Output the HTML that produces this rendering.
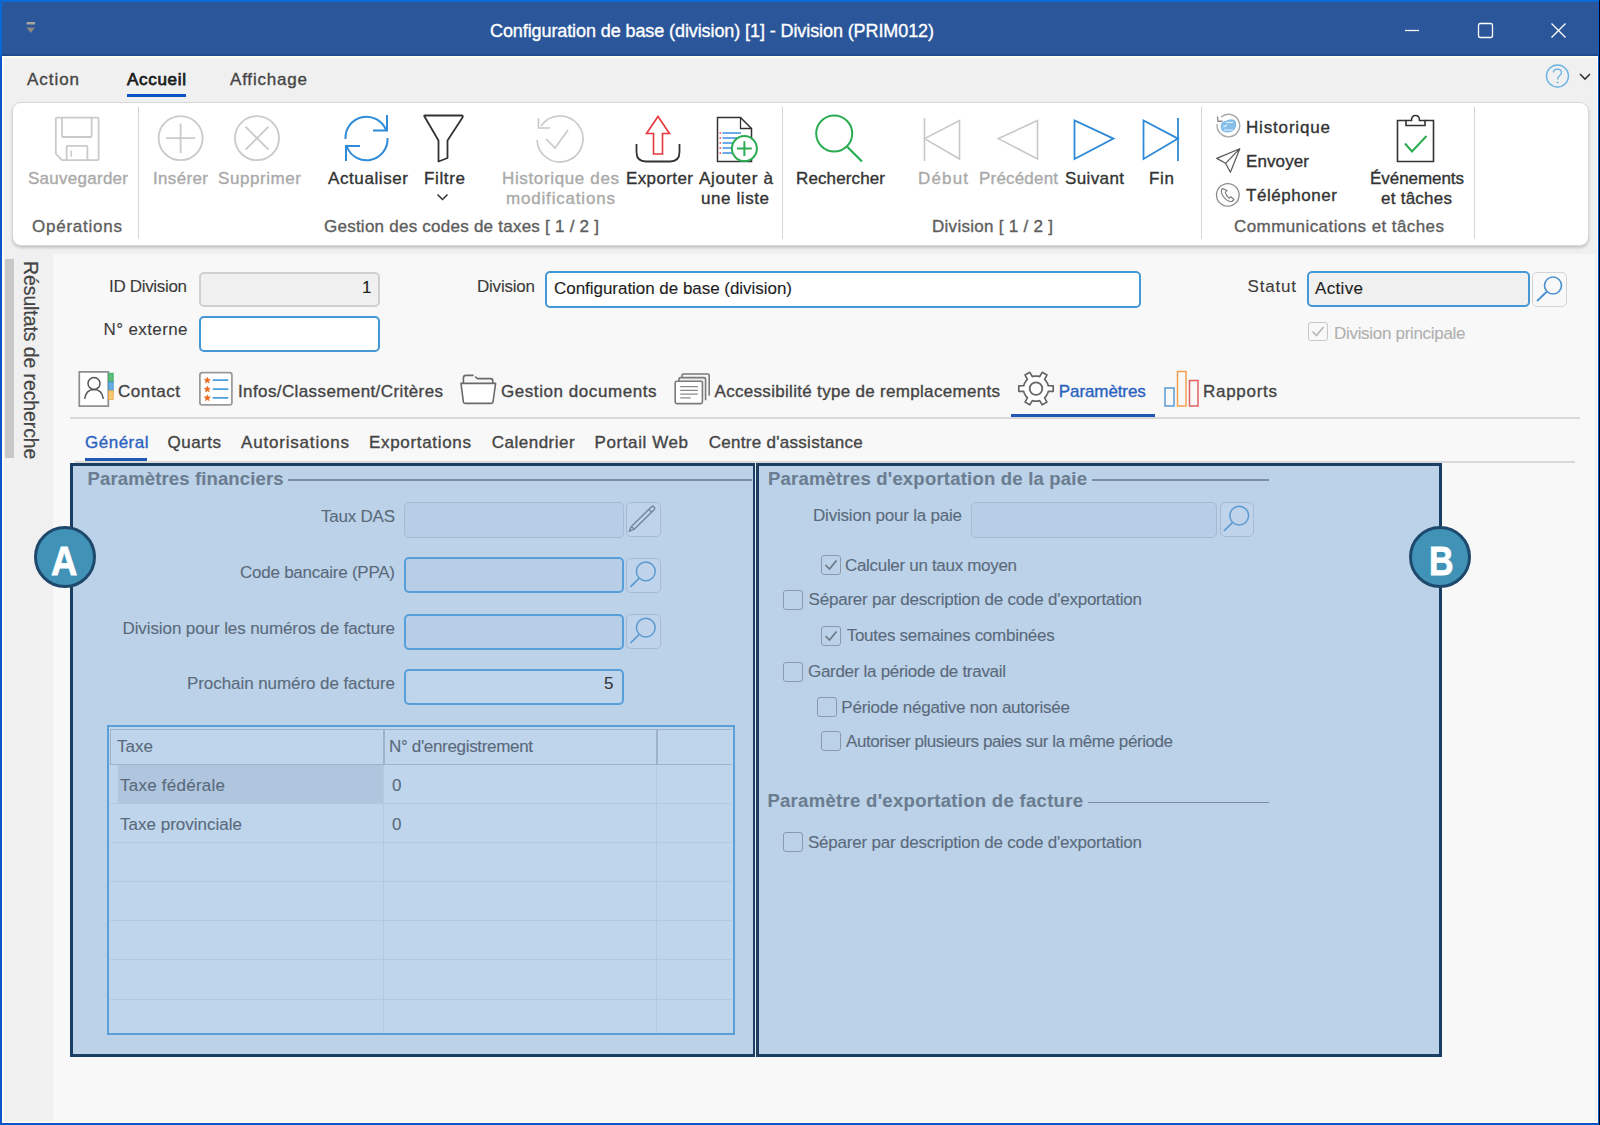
<!DOCTYPE html>
<html><head><meta charset="utf-8"><title>Configuration de base (division)</title>
<style>html,body{margin:0;padding:0}body{width:1600px;height:1125px;overflow:hidden;position:relative;font-family:"Liberation Sans", sans-serif;background:#f8f8f8}svg{overflow:visible}</style>
</head><body>
<div style="position:absolute;left:0px;top:0px;width:1600px;height:1125px;background:#0a55cc"></div>
<div style="position:absolute;left:0px;top:0px;width:1600px;height:1.5px;background:#0b6ad8"></div>
<div style="position:absolute;left:0px;top:0px;width:2px;height:57px;background:#0868d6"></div>
<div style="position:absolute;left:2px;top:1.5px;width:1596px;height:53px;background:#2b579a"></div>
<div style="position:absolute;left:2px;top:54px;width:1596px;height:1.5px;background:#1f4b8e"></div>
<div style="position:absolute;left:2px;top:55.5px;width:1596px;height:1067.5px;background:#fffcf4"></div>
<div style="position:absolute;left:4px;top:57.5px;width:1593px;height:1063.5px;background:#f0f0f0"></div>
<div style="position:absolute;left:53px;top:254px;width:1542px;height:867px;background:#f8f8f8"></div>
<div style="position:absolute;left:1599px;top:0px;width:1px;height:1125px;background:#05081a"></div>
<svg style="position:absolute;left:24px;top:20px;" width="14" height="16" viewBox="24 20 14 16" fill="none"><rect x="26.5" y="22" width="8.5" height="2.5" fill="#a8a49c"/><path d="M26.5 27.5 L35 27.5 L30.75 33 Z" fill="#8c8880"/></svg>
<svg style="position:absolute;left:1400px;top:18px;" width="170" height="26" viewBox="1400 18 170 26" fill="none"><path d="M1405 30.5 H1419" stroke="#fff" stroke-width="1.3"/><rect x="1478.5" y="23.5" width="14" height="14" rx="2" stroke="#fff" stroke-width="1.3"/><path d="M1551.5 23.5 L1565.5 37.5 M1565.5 23.5 L1551.5 37.5" stroke="#fff" stroke-width="1.3"/></svg>
<div style="position:absolute;left:127px;top:94px;width:59px;height:3px;background:#0b52c4"></div>
<svg style="position:absolute;left:1540px;top:60px;" width="56" height="34" viewBox="1540 60 56 34" fill="none"><circle cx="1557.5" cy="76" r="11" stroke="#6cb4e4" stroke-width="1.4"/><path d="M1553.5 72.5 C1553.5 68 1561.5 68 1561.5 72.5 C1561.5 75.5 1557.5 75.5 1557.5 79.5" stroke="#6cb4e4" stroke-width="1.4"/><circle cx="1557.5" cy="82.5" r="0.9" fill="#6cb4e4"/><path d="M1580 74 L1585 79 L1590 74" stroke="#333" stroke-width="1.6"/></svg>
<div style="position:absolute;left:11.5px;top:102px;width:1577.5px;height:144px;background:#fff;border:1px solid #d8d8d8;border-radius:9px;box-sizing:border-box;box-shadow:0 2px 3px rgba(0,0,0,0.18)"></div>
<div style="position:absolute;left:138px;top:107px;width:1px;height:132px;background:#d6d6d6"></div>
<div style="position:absolute;left:782px;top:107px;width:1px;height:132px;background:#d6d6d6"></div>
<div style="position:absolute;left:1201px;top:107px;width:1px;height:132px;background:#d6d6d6"></div>
<div style="position:absolute;left:1474px;top:107px;width:1px;height:132px;background:#d6d6d6"></div>
<svg style="position:absolute;left:50px;top:112px;" width="54" height="54" viewBox="50 112 54 54" fill="none"><path d="M55.8 118.8 Q55.8 117.6 57 117.6 H97.4 Q98.6 117.6 98.6 118.8 V159 Q98.6 160.2 97.4 160.2 H62 L55.8 153.6 Z" stroke="#cacaca" stroke-width="1.8" stroke-linejoin="round"/><path d="M62 117.6 V136.2 Q62 137 62.8 137 H90.8 Q91.6 137 91.6 136.2 V117.6" stroke="#cacaca" stroke-width="1.8"/><path d="M66.6 160.2 V146.6 Q66.6 145.8 67.4 145.8 H86.6 Q87.4 145.8 87.4 146.6 V160.2" stroke="#cacaca" stroke-width="1.8"/><path d="M71.2 151 V156.2" stroke="#cacaca" stroke-width="1.5" stroke-linecap="round"/></svg>
<svg style="position:absolute;left:155px;top:112px;" width="126" height="54" viewBox="155 112 126 54" fill="none"><circle cx="180.6" cy="138.2" r="22" stroke="#cacaca" stroke-width="1.8"/><path d="M166 138.2 H195.2 M180.6 123.5 V153" stroke="#cacaca" stroke-width="1.8"/><circle cx="257" cy="138.2" r="22" stroke="#cacaca" stroke-width="1.8"/><path d="M245.5 126.7 L268.5 149.7 M268.5 126.7 L245.5 149.7" stroke="#cacaca" stroke-width="1.8"/></svg>
<svg style="position:absolute;left:340px;top:110px;" width="54" height="56" viewBox="340 110 54 56" fill="none"><path d="M345.5 139 A21 21 0 0 1 386 130" stroke="#2f8ad8" stroke-width="2"/><path d="M387.5 138 A21 21 0 0 1 347 147" stroke="#2f8ad8" stroke-width="2"/><path d="M387 115 V130.5 H373" stroke="#2f8ad8" stroke-width="2"/><path d="M346 161 V146 H360" stroke="#2f8ad8" stroke-width="2"/></svg>
<svg style="position:absolute;left:418px;top:110px;" width="52" height="56" viewBox="418 110 52 56" fill="none"><path d="M424.5 116.5 Q423.5 115.5 425 115.5 H461.5 Q463.5 115.5 462.5 117.5 L447.5 140.5 V158 L438.5 161.5 V140.5 Z" stroke="#333" stroke-width="1.8" stroke-linejoin="round"/></svg>
<svg style="position:absolute;left:530px;top:110px;" width="60" height="58" viewBox="530 110 60 58" fill="none"><path d="M541 126 A23 23 0 1 1 537 140" stroke="#c8c8c8" stroke-width="1.6"/><path d="M538.5 118 V128 H550" stroke="#c8c8c8" stroke-width="1.6"/><path d="M546 139 L555 148 L568 130" stroke="#c8c8c8" stroke-width="1.6"/></svg>
<svg style="position:absolute;left:630px;top:110px;" width="56" height="58" viewBox="630 110 56 58" fill="none"><path d="M636.5 144 V152 Q636.5 161.5 646 161.5 H670 Q679.5 161.5 679.5 152 V144" stroke="#333" stroke-width="1.8"/><path d="M658 116.5 L646.5 133.5 H653.5 V154 H662.5 V133.5 H669.5 Z" stroke="#e8373c" stroke-width="1.6" stroke-linejoin="miter"/></svg>
<svg style="position:absolute;left:712px;top:112px;" width="48" height="54" viewBox="712 112 48 54" fill="none"><path d="M717.5 117.5 H740.5 L751.5 128.5 V161.5 H717.5 Z" stroke="#333" stroke-width="1.5"/><path d="M740.5 117.5 V128.5 H751.5" stroke="#333" stroke-width="1.3"/><path d="M722.5 133 H741" stroke="#3d8fe0" stroke-width="1.5"/><path d="M719.5 133 H721" stroke="#e84040" stroke-width="1.5"/><path d="M722.5 138 H741" stroke="#3d8fe0" stroke-width="1.5"/><path d="M719.5 138 H721" stroke="#e84040" stroke-width="1.5"/><path d="M722.5 143 H741" stroke="#3d8fe0" stroke-width="1.5"/><path d="M719.5 143 H721" stroke="#e84040" stroke-width="1.5"/><path d="M722.5 148 H741" stroke="#3d8fe0" stroke-width="1.5"/><path d="M719.5 148 H721" stroke="#e84040" stroke-width="1.5"/><path d="M722.5 153 H741" stroke="#3d8fe0" stroke-width="1.5"/><path d="M719.5 153 H721" stroke="#e84040" stroke-width="1.5"/><circle cx="744.4" cy="148.6" r="12.5" fill="#fff" stroke="#2aad52" stroke-width="2"/><path d="M737 148.6 H751.8 M744.4 141.2 V156" stroke="#2aad52" stroke-width="2"/></svg>
<svg style="position:absolute;left:810px;top:110px;" width="58" height="58" viewBox="810 110 58 58" fill="none"><circle cx="834.2" cy="133.5" r="18" stroke="#2aad52" stroke-width="2"/><path d="M847 146.5 L862 161.5" stroke="#2aad52" stroke-width="2.2"/></svg>
<svg style="position:absolute;left:915px;top:112px;" width="270" height="54" viewBox="915 112 270 54" fill="none"><path d="M924.5 118 V161" stroke="#c8c8c8" stroke-width="1.6"/><path d="M924.5 138.6 L959.5 120.5 V159 Z" stroke="#c8c8c8" stroke-width="1.6" stroke-linejoin="miter"/><path d="M998.5 138.6 L1037.5 120.5 V159 Z" stroke="#c8c8c8" stroke-width="1.6"/><path d="M1074.5 120.5 V159 L1113.5 138.6 Z" stroke="#2f8ad8" stroke-width="1.8"/><path d="M1143.5 120.5 V159 L1178 138.6 Z" stroke="#2f8ad8" stroke-width="1.8"/><path d="M1178 118 V161" stroke="#2f8ad8" stroke-width="1.8"/></svg>
<svg style="position:absolute;left:1212px;top:112px;" width="32" height="96" viewBox="1212 112 32 96" fill="none"><path d="M1221 117 A11.3 11.3 0 1 1 1217.2 124" stroke="#a8a8a8" stroke-width="1.4"/><path d="M1217.5 116.5 L1218 121.5 L1222.5 121" stroke="#888" stroke-width="1.3"/><path d="M1220.5 126 Q1221 121.5 1225 121 L1229 119.5 Q1235 118.5 1236 122 Q1237 126 1235 129 Q1232 133 1226 132.5 Q1220.5 131.5 1220.5 126 Z" fill="#86bfe8"/><path d="M1226 122.5 H1233 M1223.5 127 L1227 125 M1224 130 H1233" stroke="#e6f2fb" stroke-width="1.2"/><path d="M1216.7 158.4 L1239.8 148.7 L1230.4 172.2 L1225.6 163.3 Z M1225.6 163.3 L1239.8 148.7" stroke="#555" stroke-width="1.2" stroke-linejoin="round"/><circle cx="1227.8" cy="194.9" r="11.3" stroke="#8a8a8a" stroke-width="1.3"/><path d="M1222.5 188.5 Q1220 191 1223 196 Q1227 202 1232 201.5 L1234 199.5 L1231 196.8 L1229 198.2 Q1226 195.5 1225.3 192.2 L1227 190.6 Z" stroke="#777" stroke-width="1.1" stroke-linejoin="round"/></svg>
<svg style="position:absolute;left:1392px;top:110px;" width="48" height="56" viewBox="1392 110 48 56" fill="none"><path d="M1406 120.5 H1397.5 V161.5 H1433.5 V120.5 H1425" stroke="#333" stroke-width="1.6"/><path d="M1406 125.5 V120.5 H1411.5 Q1411.5 115.5 1415.5 115.5 Q1419.5 115.5 1419.5 120.5 H1425 V125.5 Z" stroke="#333" stroke-width="1.6"/><path d="M1405 143.5 L1412 151.5 L1426.5 136" stroke="#2aad52" stroke-width="2"/></svg>
<svg style="position:absolute;left:434px;top:190px;" width="18" height="14" viewBox="434 190 18 14" fill="none"><path d="M437.5 194.5 L442.5 199.5 L447.5 194.5" stroke="#333" stroke-width="1.5"/></svg>
<div style="position:absolute;left:5px;top:259px;width:9px;height:199px;background:#c8c8c8"></div>
<div style="position:absolute;left:22px;top:262px;width:20px;height:202px;"><div style="position:absolute;left:0;top:0;transform-origin:0 0;transform:translate(19px,-1px) rotate(90deg);white-space:nowrap;font-size:19.5px;line-height:20px;color:#444;letter-spacing:-0.1px;-webkit-text-stroke:0.2px #444">Résultats de recherche</div></div>
<div style="position:absolute;left:199px;top:272px;width:181px;height:35px;background:#f0f0f0;border:2px solid #d0d0d0;border-radius:5px;box-sizing:border-box"></div>
<div style="position:absolute;left:199px;top:315.5px;width:181px;height:36px;background:#fff;border:2px solid #4697d5;border-radius:5px;box-sizing:border-box"></div>
<div style="position:absolute;left:545.2px;top:271.4px;width:595.5px;height:36.4px;background:#fff;border:2px solid #4697d5;border-radius:5px;box-sizing:border-box"></div>
<div style="position:absolute;left:1306.6px;top:271.4px;width:223.2px;height:36px;background:#f0f0f0;border:2px solid #4697d5;border-radius:5px;box-sizing:border-box"></div>
<div style="position:absolute;left:1532px;top:272px;width:35px;height:35px;background:#f8f8f8;border:1.5px solid #d4d4d4;border-radius:5px;box-sizing:border-box"></div>
<svg style="position:absolute;left:1532px;top:272px;" width="35" height="35" viewBox="1532 272 35 35" fill="none"><circle cx="1553" cy="285.5" r="8.5" stroke="#4a90d0" stroke-width="1.6"/><path d="M1547 291.5 L1537 301" stroke="#4a90d0" stroke-width="1.8"/></svg>
<div style="position:absolute;left:1308px;top:322px;width:20px;height:19px;border:1.3px solid #c8c8c8;border-radius:3px;box-sizing:border-box"></div>
<svg style="position:absolute;left:1308px;top:322px;" width="20" height="19" viewBox="1308 322 20 19" fill="none"><path d="M1312.5 331.5 L1316.5 335.5 L1323.5 327" stroke="#b8b8b8" stroke-width="1.6"/></svg>
<svg style="position:absolute;left:75px;top:368px;" width="42" height="42" viewBox="75 368 42 42" fill="none"><rect x="79.3" y="371.9" width="29" height="34.2" stroke="#8c8c8c" stroke-width="1.7" fill="#fff"/><circle cx="94" cy="383.4" r="6" stroke="#555" stroke-width="1.5"/><path d="M84.6 398.8 Q86 389.4 94 389.4 Q102 389.4 103.4 398.8" stroke="#555" stroke-width="1.5"/><rect x="108.6" y="373.2" width="4.6" height="8.8" fill="#5cbf78" stroke="#3aa85a" stroke-width="0.8"/><rect x="108.6" y="382" width="4.6" height="8.8" fill="#6aaee0" stroke="#3d8fd0" stroke-width="0.8"/><rect x="108.6" y="390.8" width="4.6" height="8.6" fill="#f6c870" stroke="#eea040" stroke-width="0.8"/></svg>
<svg style="position:absolute;left:196px;top:368px;" width="40" height="42" viewBox="196 368 40 42" fill="none"><rect x="199.9" y="372.7" width="32" height="32.1" rx="2.4" stroke="#9a9a9a" stroke-width="1.8" fill="#fff"/><path d="M207.30 377.20 L208.15 379.24 L210.34 379.41 L208.67 380.84 L209.18 382.99 L207.30 381.84 L205.42 382.99 L205.93 380.84 L204.26 379.41 L206.45 379.24 Z" fill="#e86c20" stroke="#e86c20" stroke-width="0.6" stroke-linejoin="round"/><path d="M207.30 386.10 L208.15 388.14 L210.34 388.31 L208.67 389.74 L209.18 391.89 L207.30 390.74 L205.42 391.89 L205.93 389.74 L204.26 388.31 L206.45 388.14 Z" fill="#e86c20" stroke="#e86c20" stroke-width="0.6" stroke-linejoin="round"/><path d="M207.30 394.80 L208.15 396.84 L210.34 397.01 L208.67 398.44 L209.18 400.59 L207.30 399.44 L205.42 400.59 L205.93 398.44 L204.26 397.01 L206.45 396.84 Z" fill="#e86c20" stroke="#e86c20" stroke-width="0.6" stroke-linejoin="round"/><path d="M213.4 380.2 H227.6 M213.4 389.2 H227.6 M213.4 397.8 H227.6" stroke="#4aa0dc" stroke-width="1.8" stroke-linecap="round"/></svg>
<svg style="position:absolute;left:458px;top:370px;" width="42" height="40" viewBox="458 370 42 40" fill="none"><path d="M463.4 383.4 V378 Q463.4 375.4 466 375.4 H473 M475.6 377 L477.5 378.6 H490.5 Q492.8 378.6 492.8 381 V383.4" stroke="#6a6a6a" stroke-width="1.6" stroke-linecap="round"/><path d="M461 383.4 H495.6 L493 402 Q492.8 403.4 491.4 403.4 H465 Q463.6 403.4 463.4 402 Z" stroke="#6a6a6a" stroke-width="1.6" stroke-linejoin="round" fill="#fff"/></svg>
<svg style="position:absolute;left:672px;top:370px;" width="42" height="40" viewBox="672 370 42 40" fill="none"><path d="M682 377.5 V375.5 Q682 374 683.5 374 H707.7 Q709.2 374 709.2 375.5 V395.8" stroke="#7a7a7a" stroke-width="1.6" fill="none"/><path d="M679 381 V379 Q679 377.6 680.5 377.6 H704.1 Q705.6 377.6 705.6 379 V400.2" stroke="#7a7a7a" stroke-width="1.6" fill="#eee"/><rect x="675.2" y="381.2" width="27.2" height="22.4" rx="1.6" stroke="#7a7a7a" stroke-width="1.6" fill="#fff"/><path d="M680.2 386.6 H697.8 M680.2 390.4 H697.8 M680.2 394.2 H697.8 M680.2 397.8 H690.6" stroke="#8a8a8a" stroke-width="1.3"/></svg>
<svg style="position:absolute;left:1015px;top:368px;" width="42" height="42" viewBox="1015 368 42 42" fill="none"><path d="M1047.68 383.88 L1048.28 385.77 L1053.19 385.88 L1053.19 391.32 L1048.28 391.43 L1047.68 393.32 L1045.93 396.36 L1044.59 397.82 L1046.95 402.12 L1042.24 404.84 L1039.68 400.65 L1037.75 401.08 L1034.25 401.08 L1032.32 400.65 L1029.76 404.84 L1025.05 402.12 L1027.41 397.82 L1026.07 396.36 L1024.32 393.32 L1023.72 391.43 L1018.81 391.32 L1018.81 385.88 L1023.72 385.77 L1024.32 383.88 L1026.07 380.84 L1027.41 379.38 L1025.05 375.08 L1029.76 372.36 L1032.32 376.55 L1034.25 376.12 L1037.75 376.12 L1039.68 376.55 L1042.24 372.36 L1046.95 375.08 L1044.59 379.38 L1045.93 380.84 Z" stroke="#666" stroke-width="1.7" stroke-linejoin="round" fill="#fff"/><circle cx="1036" cy="388.6" r="6.3" stroke="#666" stroke-width="1.8"/></svg>
<div style="position:absolute;left:1011px;top:414px;width:144px;height:4px;background:#2059b4"></div>
<svg style="position:absolute;left:1162px;top:368px;" width="40" height="42" viewBox="1162 368 40 42" fill="none"><rect x="1165" y="388" width="9" height="18" stroke="#5a9bd4" stroke-width="1.5"/><rect x="1177.5" y="371.5" width="8.5" height="34.5" stroke="#f0a050" stroke-width="1.5"/><rect x="1189.5" y="380.5" width="8.5" height="25.5" stroke="#e06060" stroke-width="1.5"/></svg>
<div style="position:absolute;left:70px;top:417px;width:1510px;height:1.5px;background:#d8d8d8"></div>
<div style="position:absolute;left:85px;top:457.5px;width:62px;height:3.5px;background:#2059b4"></div>
<div style="position:absolute;left:75px;top:461px;width:1500px;height:1.5px;background:#d8d8d8"></div>
<div style="position:absolute;left:70px;top:463px;width:686px;height:594px;background:#bcd2e8;border:3px solid #1b3f62;box-sizing:border-box"></div>
<div style="position:absolute;left:756px;top:463px;width:686px;height:594px;background:#bcd2e8;border:3px solid #1b3f62;box-sizing:border-box"></div>
<div style="position:absolute;left:755px;top:463px;width:1px;height:594px;background:#e8eef4"></div>
<div style="position:absolute;left:288px;top:479px;width:464px;height:1.5px;background:#7d8ea0"></div>
<div style="position:absolute;left:403.5px;top:501.5px;width:220px;height:36px;background:#b8cee6;border:1.5px solid #a6bbd2;border-radius:5px;box-sizing:border-box"></div>
<div style="position:absolute;left:626.2px;top:501.8px;width:34.5px;height:35.5px;background:#bfd3ea;border:1.5px solid #a6bbd2;border-radius:5px;box-sizing:border-box"></div>
<svg style="position:absolute;left:626px;top:502px;" width="35" height="35" viewBox="626 502 35 35" fill="none"><g transform="translate(-0.8,0.3)"><path d="M630 531 L632.2 526.1 L652.1 506.6 Q653.5 505.3 654.9 506.6 Q656.2 508 654.9 509.4 L635 528.9 Z" stroke="#74859a" stroke-width="1.4" stroke-linejoin="round"/><path d="M632.2 526.1 L635 528.9 M649.6 509.1 L652.4 511.9" stroke="#74859a" stroke-width="1.3"/></g></svg>
<div style="position:absolute;left:403.5px;top:557.4px;width:220px;height:36px;background:#b8cee6;border:2px solid #579fd9;border-radius:5px;box-sizing:border-box"></div>
<div style="position:absolute;left:626.2px;top:557.6px;width:34.5px;height:35.5px;background:#bfd3ea;border:1.5px solid #a6bbd2;border-radius:5px;box-sizing:border-box"></div>
<svg style="position:absolute;left:626px;top:557px;" width="35" height="36" viewBox="626 557 35 36" fill="none"><circle cx="645.8" cy="571.4" r="9.4" stroke="#5b9bd2" stroke-width="1.5"/><path d="M639 578.4 L630.5 586.8" stroke="#5b9bd2" stroke-width="1.7"/></svg>
<div style="position:absolute;left:403.5px;top:613.6px;width:220px;height:36px;background:#b8cee6;border:2px solid #579fd9;border-radius:5px;box-sizing:border-box"></div>
<div style="position:absolute;left:626.2px;top:613.8000000000001px;width:34.5px;height:35.5px;background:#bfd3ea;border:1.5px solid #a6bbd2;border-radius:5px;box-sizing:border-box"></div>
<svg style="position:absolute;left:626px;top:613px;" width="35" height="36" viewBox="626 613 35 36" fill="none"><circle cx="645.8" cy="627.6" r="9.4" stroke="#5b9bd2" stroke-width="1.5"/><path d="M639 634.6 L630.5 643.0" stroke="#5b9bd2" stroke-width="1.7"/></svg>
<div style="position:absolute;left:403.5px;top:668.5px;width:220px;height:36px;background:#bfd5ec;border:2px solid #579fd9;border-radius:5px;box-sizing:border-box"></div>
<div style="position:absolute;left:106.5px;top:724.5px;width:628px;height:310px;border:2px solid #5aa0d8;box-sizing:border-box;background:#bfd5eb"></div>
<div style="position:absolute;left:110px;top:728.5px;width:546px;height:36px;border:1px solid #9fb3c8;border-right:none;box-sizing:border-box"></div>
<div style="position:absolute;left:383px;top:728.5px;width:1.5px;height:36px;background:#9fb3c8"></div>
<div style="position:absolute;left:656px;top:728.5px;width:1.5px;height:36px;background:#9fb3c8"></div>
<div style="position:absolute;left:656px;top:728.5px;width:76px;height:36px;border-top:1px solid #9fb3c8;border-bottom:1px solid #9fb3c8;box-sizing:border-box"></div>
<div style="position:absolute;left:118px;top:764.5px;width:265px;height:38px;background:#afc6de"></div>
<div style="position:absolute;left:110px;top:802.5px;width:622px;height:1px;background:#b3c9de"></div>
<div style="position:absolute;left:110px;top:841.5px;width:622px;height:1px;background:#b3c9de"></div>
<div style="position:absolute;left:110px;top:881px;width:622px;height:1px;background:#b3c9de"></div>
<div style="position:absolute;left:110px;top:920px;width:622px;height:1px;background:#b3c9de"></div>
<div style="position:absolute;left:110px;top:959px;width:622px;height:1px;background:#b3c9de"></div>
<div style="position:absolute;left:110px;top:998.5px;width:622px;height:1px;background:#b3c9de"></div>
<div style="position:absolute;left:383px;top:764.5px;width:1px;height:268px;background:#b3c9de"></div>
<div style="position:absolute;left:656px;top:764.5px;width:1px;height:268px;background:#b3c9de"></div>
<div style="position:absolute;left:1092px;top:479px;width:177px;height:1.5px;background:#7d8ea0"></div>
<div style="position:absolute;left:970.5px;top:501.5px;width:246px;height:36px;background:#b8cee6;border:1.5px solid #a6bbd2;border-radius:5px;box-sizing:border-box"></div>
<div style="position:absolute;left:1219.5px;top:501.8px;width:34.5px;height:35.5px;background:#bfd3ea;border:1.5px solid #a6bbd2;border-radius:5px;box-sizing:border-box"></div>
<svg style="position:absolute;left:1219px;top:502px;" width="36" height="36" viewBox="1219 502 36 36" fill="none"><circle cx="1239.2" cy="515.6" r="9.4" stroke="#5b9bd2" stroke-width="1.5"/><path d="M1232.4 522.6 L1223.9 531" stroke="#5b9bd2" stroke-width="1.7"/></svg>
<div style="position:absolute;left:821px;top:555px;width:20px;height:20px;border:1.3px solid #8a9aac;border-radius:3px;box-sizing:border-box"></div>
<svg style="position:absolute;left:821px;top:555px;" width="20" height="20" viewBox="821 555 20 20" fill="none"><path d="M825.5 565 L829.5 569 L836.5 560.5" stroke="#6a7888" stroke-width="1.7"/></svg>
<div style="position:absolute;left:783px;top:589.5px;width:20px;height:20px;border:1.3px solid #8a9aac;border-radius:3px;box-sizing:border-box"></div>
<div style="position:absolute;left:821px;top:625.5px;width:20px;height:20px;border:1.3px solid #8a9aac;border-radius:3px;box-sizing:border-box"></div>
<svg style="position:absolute;left:821px;top:625.5px;" width="20" height="20" viewBox="821 625.5 20 20" fill="none"><path d="M825.5 635.5 L829.5 639.5 L836.5 631.0" stroke="#6a7888" stroke-width="1.7"/></svg>
<div style="position:absolute;left:783px;top:661.5px;width:20px;height:20px;border:1.3px solid #8a9aac;border-radius:3px;box-sizing:border-box"></div>
<div style="position:absolute;left:816.5px;top:697px;width:20px;height:20px;border:1.3px solid #8a9aac;border-radius:3px;box-sizing:border-box"></div>
<div style="position:absolute;left:821px;top:730.5px;width:20px;height:20px;border:1.3px solid #8a9aac;border-radius:3px;box-sizing:border-box"></div>
<div style="position:absolute;left:1088px;top:801.5px;width:181px;height:1.5px;background:#7d8ea0"></div>
<div style="position:absolute;left:783px;top:832px;width:20px;height:20px;border:1.3px solid #8a9aac;border-radius:3px;box-sizing:border-box"></div>
<div style="position:absolute;left:33.5px;top:526px;width:62px;height:62px;border-radius:50%;background:#4093b7;border:3.5px solid #1e486c;box-sizing:border-box"></div>
<div style="position:absolute;left:1409px;top:526px;width:62px;height:62px;border-radius:50%;background:#4093b7;border:3.5px solid #1e486c;box-sizing:border-box"></div>
<div style="position:absolute;left:490.0px;top:21.76px;font-size:18px;line-height:18px;font-weight:400;color:#ffffff;letter-spacing:-0.093px;white-space:nowrap;-webkit-text-stroke:0.35px #ffffff;">Configuration de base (division) [1] - Division (PRIM012)</div>
<div style="position:absolute;left:27.0px;top:70.61px;font-size:17px;line-height:17px;font-weight:400;color:#454545;letter-spacing:0.950px;white-space:nowrap;-webkit-text-stroke:0.35px #454545;">Action</div>
<div style="position:absolute;left:127.0px;top:70.61px;font-size:17px;line-height:17px;font-weight:400;color:#1c1c1c;letter-spacing:0.700px;white-space:nowrap;-webkit-text-stroke:0.75px #1c1c1c;">Accueil</div>
<div style="position:absolute;left:230.0px;top:70.61px;font-size:17px;line-height:17px;font-weight:400;color:#454545;letter-spacing:0.803px;white-space:nowrap;-webkit-text-stroke:0.35px #454545;">Affichage</div>
<div style="position:absolute;left:28.0px;top:169.61px;font-size:17px;line-height:17px;font-weight:400;color:#aaaaaa;letter-spacing:0.266px;white-space:nowrap;-webkit-text-stroke:0.35px #aaaaaa;">Sauvegarder</div>
<div style="position:absolute;left:153.0px;top:169.61px;font-size:17px;line-height:17px;font-weight:400;color:#aaaaaa;letter-spacing:0.348px;white-space:nowrap;-webkit-text-stroke:0.35px #aaaaaa;">Insérer</div>
<div style="position:absolute;left:218.0px;top:169.61px;font-size:17px;line-height:17px;font-weight:400;color:#aaaaaa;letter-spacing:0.573px;white-space:nowrap;-webkit-text-stroke:0.35px #aaaaaa;">Supprimer</div>
<div style="position:absolute;left:328.0px;top:169.61px;font-size:17px;line-height:17px;font-weight:400;color:#333333;letter-spacing:0.595px;white-space:nowrap;-webkit-text-stroke:0.35px #333333;">Actualiser</div>
<div style="position:absolute;left:424.0px;top:169.61px;font-size:17px;line-height:17px;font-weight:400;color:#333333;letter-spacing:0.645px;white-space:nowrap;-webkit-text-stroke:0.35px #333333;">Filtre</div>
<div style="position:absolute;left:502.0px;top:169.61px;font-size:17px;line-height:17px;font-weight:400;color:#aaaaaa;letter-spacing:0.641px;white-space:nowrap;-webkit-text-stroke:0.35px #aaaaaa;">Historique des</div>
<div style="position:absolute;left:506.0px;top:189.61px;font-size:17px;line-height:17px;font-weight:400;color:#aaaaaa;letter-spacing:0.816px;white-space:nowrap;-webkit-text-stroke:0.35px #aaaaaa;">modifications</div>
<div style="position:absolute;left:626.0px;top:169.61px;font-size:17px;line-height:17px;font-weight:400;color:#333333;letter-spacing:0.393px;white-space:nowrap;-webkit-text-stroke:0.35px #333333;">Exporter</div>
<div style="position:absolute;left:699.0px;top:169.61px;font-size:17px;line-height:17px;font-weight:400;color:#333333;letter-spacing:0.745px;white-space:nowrap;-webkit-text-stroke:0.35px #333333;">Ajouter à</div>
<div style="position:absolute;left:701.0px;top:189.61px;font-size:17px;line-height:17px;font-weight:400;color:#333333;letter-spacing:0.585px;white-space:nowrap;-webkit-text-stroke:0.35px #333333;">une liste</div>
<div style="position:absolute;left:796.0px;top:169.61px;font-size:17px;line-height:17px;font-weight:400;color:#333333;letter-spacing:0.125px;white-space:nowrap;-webkit-text-stroke:0.35px #333333;">Rechercher</div>
<div style="position:absolute;left:918.0px;top:169.61px;font-size:17px;line-height:17px;font-weight:400;color:#aaaaaa;letter-spacing:1.159px;white-space:nowrap;-webkit-text-stroke:0.35px #aaaaaa;">Début</div>
<div style="position:absolute;left:979.0px;top:169.61px;font-size:17px;line-height:17px;font-weight:400;color:#aaaaaa;letter-spacing:0.188px;white-space:nowrap;-webkit-text-stroke:0.35px #aaaaaa;">Précédent</div>
<div style="position:absolute;left:1065.0px;top:169.61px;font-size:17px;line-height:17px;font-weight:400;color:#333333;letter-spacing:0.383px;white-space:nowrap;-webkit-text-stroke:0.35px #333333;">Suivant</div>
<div style="position:absolute;left:1149.0px;top:169.61px;font-size:17px;line-height:17px;font-weight:400;color:#333333;letter-spacing:0.692px;white-space:nowrap;-webkit-text-stroke:0.35px #333333;">Fin</div>
<div style="position:absolute;left:1246.0px;top:118.61px;font-size:17px;line-height:17px;font-weight:400;color:#333333;letter-spacing:0.830px;white-space:nowrap;-webkit-text-stroke:0.35px #333333;">Historique</div>
<div style="position:absolute;left:1246.0px;top:152.61px;font-size:17px;line-height:17px;font-weight:400;color:#333333;letter-spacing:0.106px;white-space:nowrap;-webkit-text-stroke:0.35px #333333;">Envoyer</div>
<div style="position:absolute;left:1246.0px;top:186.61px;font-size:17px;line-height:17px;font-weight:400;color:#333333;letter-spacing:0.555px;white-space:nowrap;-webkit-text-stroke:0.35px #333333;">Téléphoner</div>
<div style="position:absolute;left:1370.0px;top:169.61px;font-size:17px;line-height:17px;font-weight:400;color:#333333;letter-spacing:-0.055px;white-space:nowrap;-webkit-text-stroke:0.35px #333333;">Événements</div>
<div style="position:absolute;left:1381.0px;top:189.61px;font-size:17px;line-height:17px;font-weight:400;color:#333333;letter-spacing:0.252px;white-space:nowrap;-webkit-text-stroke:0.35px #333333;">et tâches</div>
<div style="position:absolute;left:32.0px;top:217.61px;font-size:17px;line-height:17px;font-weight:400;color:#5e5e5e;letter-spacing:0.760px;white-space:nowrap;-webkit-text-stroke:0.35px #5e5e5e;">Opérations</div>
<div style="position:absolute;left:324.0px;top:217.61px;font-size:17px;line-height:17px;font-weight:400;color:#5e5e5e;letter-spacing:0.243px;white-space:nowrap;-webkit-text-stroke:0.35px #5e5e5e;">Gestion des codes de taxes [ 1 / 2 ]</div>
<div style="position:absolute;left:932.0px;top:217.61px;font-size:17px;line-height:17px;font-weight:400;color:#5e5e5e;letter-spacing:0.282px;white-space:nowrap;-webkit-text-stroke:0.35px #5e5e5e;">Division [ 1 / 2 ]</div>
<div style="position:absolute;left:1234.0px;top:217.61px;font-size:17px;line-height:17px;font-weight:400;color:#5e5e5e;letter-spacing:0.421px;white-space:nowrap;-webkit-text-stroke:0.35px #5e5e5e;">Communications et tâches</div>
<div style="position:absolute;left:109.0px;top:277.61px;font-size:17px;line-height:17px;font-weight:400;color:#3c3c3c;letter-spacing:-0.324px;white-space:nowrap;-webkit-text-stroke:0.12px #3c3c3c;">ID Division</div>
<div style="position:absolute;left:103.5px;top:321.11px;font-size:17px;line-height:17px;font-weight:400;color:#3c3c3c;letter-spacing:0.389px;white-space:nowrap;-webkit-text-stroke:0.12px #3c3c3c;">N° externe</div>
<div style="position:absolute;left:477.0px;top:277.61px;font-size:17px;line-height:17px;font-weight:400;color:#3c3c3c;letter-spacing:-0.217px;white-space:nowrap;-webkit-text-stroke:0.12px #3c3c3c;">Division</div>
<div style="position:absolute;left:1247.5px;top:277.61px;font-size:17px;line-height:17px;font-weight:400;color:#3c3c3c;letter-spacing:0.817px;white-space:nowrap;-webkit-text-stroke:0.12px #3c3c3c;">Statut</div>
<div style="position:absolute;left:362.0px;top:278.61px;font-size:17px;line-height:17px;font-weight:400;color:#222;letter-spacing:0.000px;white-space:nowrap;-webkit-text-stroke:0.12px #222;">1</div>
<div style="position:absolute;left:554.0px;top:279.61px;font-size:17px;line-height:17px;font-weight:400;color:#1e1e1e;letter-spacing:-0.035px;white-space:nowrap;-webkit-text-stroke:0.12px #1e1e1e;">Configuration de base (division)</div>
<div style="position:absolute;left:1315.0px;top:279.61px;font-size:17px;line-height:17px;font-weight:400;color:#1e1e1e;letter-spacing:0.341px;white-space:nowrap;-webkit-text-stroke:0.12px #1e1e1e;">Active</div>
<div style="position:absolute;left:1334.0px;top:324.61px;font-size:17px;line-height:17px;font-weight:400;color:#b0b0b0;letter-spacing:-0.306px;white-space:nowrap;-webkit-text-stroke:0.12px #b0b0b0;">Division principale</div>
<div style="position:absolute;left:118.0px;top:382.61px;font-size:17px;line-height:17px;font-weight:400;color:#444;letter-spacing:0.569px;white-space:nowrap;-webkit-text-stroke:0.35px #444;">Contact</div>
<div style="position:absolute;left:238.0px;top:382.61px;font-size:17px;line-height:17px;font-weight:400;color:#444;letter-spacing:0.393px;white-space:nowrap;-webkit-text-stroke:0.35px #444;">Infos/Classement/Critères</div>
<div style="position:absolute;left:501.0px;top:382.61px;font-size:17px;line-height:17px;font-weight:400;color:#444;letter-spacing:0.565px;white-space:nowrap;-webkit-text-stroke:0.35px #444;">Gestion documents</div>
<div style="position:absolute;left:714.5px;top:382.61px;font-size:17px;line-height:17px;font-weight:400;color:#444;letter-spacing:0.310px;white-space:nowrap;-webkit-text-stroke:0.35px #444;">Accessibilité type de remplacements</div>
<div style="position:absolute;left:1058.8px;top:382.61px;font-size:17px;line-height:17px;font-weight:400;color:#2a62c0;letter-spacing:-0.096px;white-space:nowrap;-webkit-text-stroke:0.35px #2a62c0;">Paramètres</div>
<div style="position:absolute;left:1203.0px;top:382.61px;font-size:17px;line-height:17px;font-weight:400;color:#444;letter-spacing:0.717px;white-space:nowrap;-webkit-text-stroke:0.35px #444;">Rapports</div>
<div style="position:absolute;left:85.0px;top:433.61px;font-size:17px;line-height:17px;font-weight:400;color:#2a62c0;letter-spacing:0.503px;white-space:nowrap;-webkit-text-stroke:0.35px #2a62c0;">Général</div>
<div style="position:absolute;left:167.5px;top:433.61px;font-size:17px;line-height:17px;font-weight:400;color:#444;letter-spacing:0.497px;white-space:nowrap;-webkit-text-stroke:0.35px #444;">Quarts</div>
<div style="position:absolute;left:241.0px;top:433.61px;font-size:17px;line-height:17px;font-weight:400;color:#444;letter-spacing:0.811px;white-space:nowrap;-webkit-text-stroke:0.35px #444;">Autorisations</div>
<div style="position:absolute;left:369.0px;top:433.61px;font-size:17px;line-height:17px;font-weight:400;color:#444;letter-spacing:0.682px;white-space:nowrap;-webkit-text-stroke:0.35px #444;">Exportations</div>
<div style="position:absolute;left:491.7px;top:433.61px;font-size:17px;line-height:17px;font-weight:400;color:#444;letter-spacing:0.508px;white-space:nowrap;-webkit-text-stroke:0.35px #444;">Calendrier</div>
<div style="position:absolute;left:594.6px;top:433.61px;font-size:17px;line-height:17px;font-weight:400;color:#444;letter-spacing:0.584px;white-space:nowrap;-webkit-text-stroke:0.35px #444;">Portail Web</div>
<div style="position:absolute;left:708.7px;top:433.61px;font-size:17px;line-height:17px;font-weight:400;color:#444;letter-spacing:0.291px;white-space:nowrap;-webkit-text-stroke:0.35px #444;">Centre d'assistance</div>
<div style="position:absolute;left:87.5px;top:469.94px;font-size:18.5px;line-height:18.5px;font-weight:700;color:#6b7d90;letter-spacing:0.134px;white-space:nowrap;-webkit-text-stroke:0.1px #6b7d90;">Paramètres financiers</div>
<div style="position:absolute;left:321.0px;top:507.61px;font-size:17px;line-height:17px;font-weight:400;color:#5a6a7c;letter-spacing:-0.227px;white-space:nowrap;-webkit-text-stroke:0.1px #5a6a7c;">Taux DAS</div>
<div style="position:absolute;left:240.0px;top:563.61px;font-size:17px;line-height:17px;font-weight:400;color:#5a6a7c;letter-spacing:-0.243px;white-space:nowrap;-webkit-text-stroke:0.1px #5a6a7c;">Code bancaire (PPA)</div>
<div style="position:absolute;left:122.5px;top:619.61px;font-size:17px;line-height:17px;font-weight:400;color:#5a6a7c;letter-spacing:-0.097px;white-space:nowrap;-webkit-text-stroke:0.1px #5a6a7c;">Division pour les numéros de facture</div>
<div style="position:absolute;left:187.0px;top:674.61px;font-size:17px;line-height:17px;font-weight:400;color:#5a6a7c;letter-spacing:-0.071px;white-space:nowrap;-webkit-text-stroke:0.1px #5a6a7c;">Prochain numéro de facture</div>
<div style="position:absolute;left:604.0px;top:674.61px;font-size:17px;line-height:17px;font-weight:400;color:#333;letter-spacing:0.000px;white-space:nowrap;-webkit-text-stroke:0.1px #333;">5</div>
<div style="position:absolute;left:117.0px;top:738.11px;font-size:17px;line-height:17px;font-weight:400;color:#5a6a7c;letter-spacing:0.030px;white-space:nowrap;-webkit-text-stroke:0.1px #5a6a7c;">Taxe</div>
<div style="position:absolute;left:389.0px;top:738.11px;font-size:17px;line-height:17px;font-weight:400;color:#5a6a7c;letter-spacing:-0.327px;white-space:nowrap;-webkit-text-stroke:0.1px #5a6a7c;">N° d'enregistrement</div>
<div style="position:absolute;left:120.0px;top:776.61px;font-size:17px;line-height:17px;font-weight:400;color:#5a6a7c;letter-spacing:0.244px;white-space:nowrap;-webkit-text-stroke:0.1px #5a6a7c;">Taxe fédérale</div>
<div style="position:absolute;left:392.0px;top:776.61px;font-size:17px;line-height:17px;font-weight:400;color:#5a6a7c;letter-spacing:0.000px;white-space:nowrap;-webkit-text-stroke:0.1px #5a6a7c;">0</div>
<div style="position:absolute;left:120.0px;top:816.11px;font-size:17px;line-height:17px;font-weight:400;color:#5a6a7c;letter-spacing:0.007px;white-space:nowrap;-webkit-text-stroke:0.1px #5a6a7c;">Taxe provinciale</div>
<div style="position:absolute;left:392.0px;top:816.11px;font-size:17px;line-height:17px;font-weight:400;color:#5a6a7c;letter-spacing:0.000px;white-space:nowrap;-webkit-text-stroke:0.1px #5a6a7c;">0</div>
<div style="position:absolute;left:768.0px;top:469.94px;font-size:18.5px;line-height:18.5px;font-weight:700;color:#6b7d90;letter-spacing:0.211px;white-space:nowrap;-webkit-text-stroke:0.1px #6b7d90;">Paramètres d'exportation de la paie</div>
<div style="position:absolute;left:813.0px;top:506.61px;font-size:17px;line-height:17px;font-weight:400;color:#5a6a7c;letter-spacing:-0.204px;white-space:nowrap;-webkit-text-stroke:0.1px #5a6a7c;">Division pour la paie</div>
<div style="position:absolute;left:845.0px;top:556.61px;font-size:17px;line-height:17px;font-weight:400;color:#5a6a7c;letter-spacing:-0.314px;white-space:nowrap;-webkit-text-stroke:0.1px #5a6a7c;">Calculer un taux moyen</div>
<div style="position:absolute;left:808.6px;top:590.61px;font-size:17px;line-height:17px;font-weight:400;color:#5a6a7c;letter-spacing:-0.229px;white-space:nowrap;-webkit-text-stroke:0.1px #5a6a7c;">Séparer par description de code d'exportation</div>
<div style="position:absolute;left:846.7px;top:626.61px;font-size:17px;line-height:17px;font-weight:400;color:#5a6a7c;letter-spacing:-0.271px;white-space:nowrap;-webkit-text-stroke:0.1px #5a6a7c;">Toutes semaines combinées</div>
<div style="position:absolute;left:808.0px;top:662.61px;font-size:17px;line-height:17px;font-weight:400;color:#5a6a7c;letter-spacing:-0.296px;white-space:nowrap;-webkit-text-stroke:0.1px #5a6a7c;">Garder la période de travail</div>
<div style="position:absolute;left:841.3px;top:698.61px;font-size:17px;line-height:17px;font-weight:400;color:#5a6a7c;letter-spacing:-0.229px;white-space:nowrap;-webkit-text-stroke:0.1px #5a6a7c;">Période négative non autorisée</div>
<div style="position:absolute;left:846.0px;top:732.61px;font-size:17px;line-height:17px;font-weight:400;color:#5a6a7c;letter-spacing:-0.428px;white-space:nowrap;-webkit-text-stroke:0.1px #5a6a7c;">Autoriser plusieurs paies sur la même période</div>
<div style="position:absolute;left:767.4px;top:792.34px;font-size:18.5px;line-height:18.5px;font-weight:700;color:#6b7d90;letter-spacing:0.302px;white-space:nowrap;-webkit-text-stroke:0.1px #6b7d90;">Paramètre d'exportation de facture</div>
<div style="position:absolute;left:808.0px;top:833.61px;font-size:17px;line-height:17px;font-weight:400;color:#5a6a7c;letter-spacing:-0.215px;white-space:nowrap;-webkit-text-stroke:0.1px #5a6a7c;">Séparer par description de code d'exportation</div>
<div style="position:absolute;left:51.1px;top:540.72px;font-size:40.5px;line-height:40.5px;font-weight:700;color:#ffffff;letter-spacing:0.000px;white-space:nowrap;-webkit-text-stroke:0.1px #ffffff;transform:scaleX(0.9);transform-origin:0 0;-webkit-text-stroke:0.8px #fff">A</div>
<div style="position:absolute;left:1428.6px;top:540.72px;font-size:40.5px;line-height:40.5px;font-weight:700;color:#ffffff;letter-spacing:0.000px;white-space:nowrap;-webkit-text-stroke:0.1px #ffffff;transform:scaleX(0.84);transform-origin:0 0;-webkit-text-stroke:0.8px #fff">B</div>
</body></html>
